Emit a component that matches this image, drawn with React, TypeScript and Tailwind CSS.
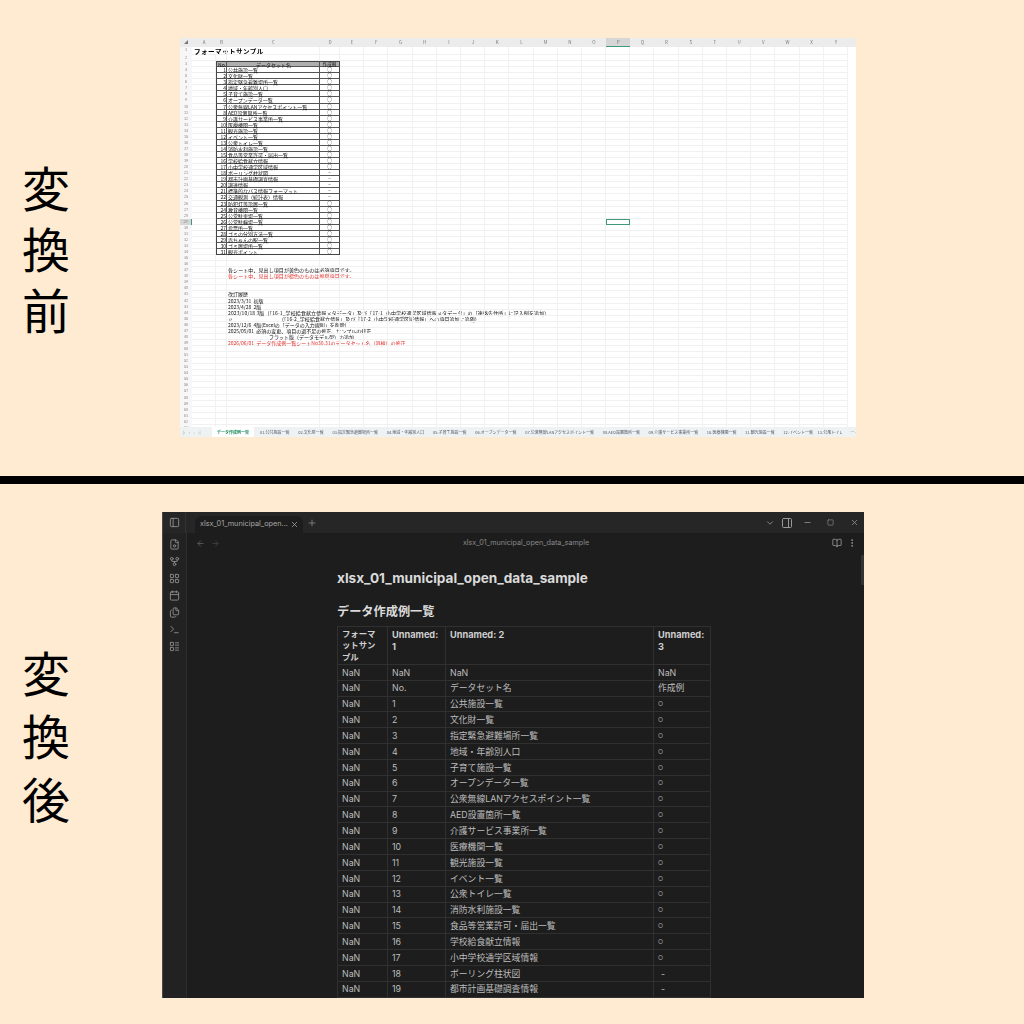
import React from 'react';
import {
  ArrowLeft,
  ArrowRight,
  BookOpen,
  Calendar,
  ChevronDown,
  EllipsisVertical,
  Files,
  GitFork,
  LayoutGrid,
  LayoutList,
  Minus,
  PanelLeft,
  PanelRight,
  Plus,
  Square,
  Terminal,
  X,
} from 'lucide-react';

const datasets = [
  '公共施設一覧',
  '文化財一覧',
  '指定緊急避難場所一覧',
  '地域・年齢別人口',
  '子育て施設一覧',
  'オープンデータ一覧',
  '公衆無線LANアクセスポイント一覧',
  'AED設置箇所一覧',
  '介護サービス事業所一覧',
  '医療機関一覧',
  '観光施設一覧',
  'イベント一覧',
  '公衆トイレ一覧',
  '消防水利施設一覧',
  '食品等営業許可・届出一覧',
  '学校給食献立情報',
  '小中学校通学区域情報',
  'ボーリング柱状図',
  '都市計画基礎調査情報',
  '調達情報',
  '標準的なバス情報フォーマット',
  '交通観測（統計表）情報',
  '防犯灯等設置一覧',
  '教育機関一覧',
  '公営駐車場一覧',
  '公営駐輪場一覧',
  '投票所一覧',
  'ゴミの分別方法一覧',
  '赤ちゃんの駅一覧',
  'ゴミ置場所一覧',
  '観光ポイント',
];

const mark = (no: number) => (no >= 18 && no <= 22 ? '−' : '○');
const columns = 'ABCDEFGHIJKLMNOPQRSTUVWXY'.split('');

// free text in column C, by row
const notes: Record<number, { text: string; className?: string }> = {
  37: { text: '各シート中、見出し項目が黄色のものは必須項目です。', className: 'pl-px tracking-[0.08px]' },
  38: { text: '各シート中、見出し項目が橙色のものは推奨項目です。', className: 'pl-px tracking-[0.08px] text-[#e0302c]' },
  41: { text: '改訂履歴', className: 'pl-px' },
  42: { text: '2023/3/31  初版', className: 'pl-px' },
  43: { text: '2023/4/28  2版', className: 'pl-px' },
  44: {
    text: '2023/10/18 3版（「16-1_学校給食献立情報メタデータ」及び「17-1_小中学校通学区域情報メタデータ」の「連絡先住所」に記入例を追加）',
    className: 'pl-px tracking-[0.11px]',
  },
  45: { text: '〃', className: 'pl-px' },
  46: { text: '2023/12/6  4版(Excelの「データの入力規則」を削除)', className: 'pl-px' },
  47: { text: '2025/05/01  必須の変更、項目の過不足の修正、サンプルの修正', className: 'pl-px' },
  48: { text: 'フラット版（データモデル型）の追加', className: 'pl-[42px]' },
  49: {
    text: '2026/06/01  データ作成例一覧シートNo30,31のデータセット名（誤植）の修正',
    className: 'pl-px text-[#e0302c]',
  },
};

const sheetTabs = [
  '01.公共施設一覧',
  '02.文化財一覧',
  '03.指定緊急避難場所一覧',
  '04.地域・年齢別人口',
  '05.子育て施設一覧',
  '06.オープンデータ一覧',
  '07.公衆無線LANアクセスポイント一覧',
  '08.AED設置箇所一覧',
  '09.介護サービス事業所一覧',
  '10.医療機関一覧',
  '11.観光施設一覧',
  '12.イベント一覧',
];

const SideLabel: React.FC<{ chars: string[]; className: string }> = ({ chars, className }) => (
  <div className={`flex flex-col items-center w-[48px] ml-[22px] text-[48px] text-black ${className}`}>
    {chars.map((c) => (
      <span key={c}>{c}</span>
    ))}
  </div>
);

const SheetCell: React.FC<{ col: string; row: number }> = ({ col, row }) => {
  const inTable = row >= 3 && row <= 34 && (col === 'B' || col === 'C' || col === 'D');
  const isHead = row === 3;
  const no = row - 3;
  const note = col === 'C' ? notes[row] : undefined;

  let cls = 'border-r border-b border-[#f1f1f1] leading-[5px]';
  if (inTable) {
    cls = 'border-b border-[#555] leading-[5px]';
    if (col === 'B') cls += ' border-l-[1.5px] border-l-[#444] border-r text-right';
    if (col === 'C') cls += ' pl-px border-r';
    if (col === 'D') cls += ' border-r-[1.5px] border-r-[#444] text-center text-[4.6px]';
    if (col === 'C' && isHead) cls += ' text-center';
    if (isHead) cls += ' border-t-[1.5px] border-t-[#444] bg-[#aeaeae] leading-[4px]';
    if (row === 34) cls += ' border-b-[1.5px] border-b-[#444]';
  }
  if (col === 'P' && row === 29) cls = 'border border-[#3f9a78]';
  if (note) cls += ` ${note.className ?? ''}`;

  let content: React.ReactNode = null;
  if (inTable) {
    if (isHead) content = col === 'B' ? 'No.' : col === 'C' ? 'データセット名' : '作成例';
    else if (col === 'B') content = no;
    else if (col === 'C') content = datasets[no - 1];
    else content = mark(no);
  }
  if (note) content = note.text;

  return (
    <div className={`relative whitespace-pre text-[#111] ${cls}`}>
      {content}
      {col === 'C' && row === 45 && (
        <span className="absolute left-[52px] top-0 tracking-[0.06px]">（「16-2_学校給食献立情報」及び「17-2_小中学校通学区域情報」への項目追加に追随）</span>
      )}
    </div>
  );
};

const Spreadsheet: React.FC = () => (
  <div className="flex flex-col w-[676px] h-[399px] mt-[38px] bg-white overflow-hidden blur-[0.35px] font-['Noto_Sans_CJK_JP',sans-serif] text-[5px]">
    <div className="flex-1 min-h-0 overflow-hidden">
      <div className="grid grid-cols-[12px_24px_11px_93px_20px_repeat(21,24.2px)_8px] grid-rows-[9px_8px_repeat(63,6.07px)]">
        {/* column letters */}
        <div className="bg-[#ececec] text-[4px] text-[#777] text-center leading-[9px]">◢</div>
        {columns.map((c) => (
          <div
            key={c}
            className={`text-center text-[4.5px] leading-[9px] text-[#777] ${
              c === 'P' ? 'bg-[#d6d6d6] border-b border-[#3f9a78]' : 'bg-[#ececec]'
            }`}
          >
            {c}
          </div>
        ))}
        <div className="bg-[#ececec]" />

        {Array.from({ length: 63 }, (_, i) => i + 1).map((row) => (
          <React.Fragment key={row}>
            <div
              className={`text-center text-[3.8px] leading-[6px] text-[#888] ${
                row === 29 ? 'bg-[#d6d6d6] border-r border-[#3f9a78]' : 'bg-[#f7f7f7]'
              }`}
            >
              {row}
            </div>
            {columns.map((col) =>
              row === 1 && col === 'A' ? (
                <div key={col} className="pl-[2px] text-[6.6px] font-bold leading-[8px] tracking-[0.4px] whitespace-pre text-black border-b border-[#f1f1f1]">
                  フォーマットサンプル
                </div>
              ) : (
                <SheetCell key={col} col={col} row={row} />
              ),
            )}
            <div />
          </React.Fragment>
        ))}
      </div>
    </div>
    <div className="flex items-stretch h-[10px] shrink-0 bg-[#eef2f3] text-[4px] leading-[9px] text-[#556]">
      <div className="flex items-center w-[32px] pl-[3px] gap-[3.5px] text-[#999]">
        <span>|‹</span>
        <span>‹</span>
        <span>›</span>
        <span>›|</span>
      </div>
      <div className="flex items-center justify-center w-[42px] mr-[3px] bg-white text-[#1a8a5c] font-bold">データ作成例一覧</div>
      <div className="flex flex-1 min-w-0 items-center gap-[8.7px] pl-[3px] whitespace-nowrap overflow-hidden">
        {sheetTabs.map((t) => (
          <span key={t}>{t}</span>
        ))}
        <span className="-ml-[4px] w-[24px] overflow-hidden shrink-0">13.公衆トイレ</span>
        <span className="ml-auto shrink-0 pr-[1px]">⋯ +</span>
      </div>
    </div>
  </div>
);

const FileIcon: React.FC = () => (
  <svg width="11" height="11" viewBox="0 0 24 24" fill="none" stroke="currentColor" strokeWidth="2" strokeLinecap="round" strokeLinejoin="round">
    <path d="M15 2H6a2 2 0 0 0-2 2v16a2 2 0 0 0 2 2h12a2 2 0 0 0 2-2V7Z" />
    <path d="M14 2v4a2 2 0 0 0 2 2h4" />
    <circle cx="12" cy="15" r="2.5" />
  </svg>
);

const headers: React.ReactNode[] = [
  <span key="f" className="block text-[8.4px] leading-[11.3px]">
    フォーマ
    <br />
    ットサン
    <br />
    プル
  </span>,
  'Unnamed: 1',
  'Unnamed: 2',
  'Unnamed: 3',
];

const Vault: React.FC = () => {
  const rows = [
    ['NaN', 'NaN', 'NaN', 'NaN'],
    ['NaN', 'No.', 'データセット名', '作成例'],
    ...datasets.slice(0, 19).map((name, i) => ['NaN', String(i + 1), name, i + 1 >= 18 ? '-' : '○']),
  ];

  return (
    <div className="flex flex-col w-[702px] h-[486px] bg-[#1d1d1d] border-l border-[#4a4a4a] text-[#bcbcbc] overflow-hidden font-['Inter','Noto_Sans_CJK_JP',sans-serif]">
      {/* title bar */}
      <div className="flex items-end h-[21px] shrink-0 bg-[#262626]">
        <div className="flex items-center justify-center w-[23px] h-full border-r border-[#333] text-[#999]">
          <PanelLeft size={11} strokeWidth={1.8} />
        </div>
        <div className="flex items-center justify-between w-[108px] h-[17px] ml-[9px] pl-[5px] pr-[4px] bg-[#1d1d1d] rounded-t-md text-[7.3px] text-[#a8a8a8]">
          <span className="whitespace-nowrap">xlsx_01_municipal_open...</span>
          <X size={9} className="shrink-0" />
        </div>
        <div className="flex items-center h-full ml-[4px] text-[#888]">
          <Plus size={10} />
        </div>
        <div className="flex items-center h-full ml-auto text-[#999]">
          <ChevronDown size={10} />
          <PanelRight size={12} className="ml-[6px]" />
          <Minus size={9} className="ml-[10px]" />
          <Square size={7} className="ml-[15px]" />
          <X size={9} className="ml-[16px] mr-[5px]" />
        </div>
      </div>

      <div className="flex flex-1 min-h-0">
        {/* ribbon */}
        <div className="flex flex-col items-center w-[24px] shrink-0 pt-[6px] gap-[6px] border-r border-[#2e2e2e] bg-[#222] text-[#8c8c8c]">
          <FileIcon />
          <GitFork size={11} />
          <LayoutGrid size={11} />
          <Calendar size={11} />
          <Files size={11} />
          <Terminal size={11} />
          <LayoutList size={11} />
        </div>

        <div className="relative flex flex-col flex-1 min-w-0">
          <div className="flex items-center h-[20px] shrink-0 pl-[9px] pr-[7px] text-[#666]">
            <ArrowLeft size={9} />
            <ArrowRight size={9} className="ml-[6px] text-[#444]" />
            <span className="flex-1 text-center text-[7.2px] text-[#8a8a8a]">xlsx_01_municipal_open_data_sample</span>
            <BookOpen size={10} className="text-[#999]" />
            <EllipsisVertical size={10} className="ml-[5px] text-[#999]" />
          </div>

          <div className="flex-1 min-h-0 overflow-hidden pl-[150px] pt-[17px]">
            <h1 className="text-[13.6px] leading-[17px] font-bold text-[#dadada]">xlsx_01_municipal_open_data_sample</h1>
            <h2 className="mt-[17px] text-[12.2px] leading-[16px] font-bold text-[#dadada]">データ作成例一覧</h2>
            <table className="mt-[6px] w-[373px] table-fixed border-collapse text-[8.8px] leading-[11.5px]">
              <colgroup>
                <col className="w-[50px]" />
                <col className="w-[58px]" />
                <col className="w-[208px]" />
                <col className="w-[57px]" />
              </colgroup>
              <thead>
                <tr className="font-bold text-left text-[#cfcfcf]">
                  {headers.map((h, i) => (
                    <th key={i} className="align-top border border-[#303030] px-[4px] pt-[2px] pb-[1px] text-[9.2px]">
                      {h}
                    </th>
                  ))}
                </tr>
              </thead>
              <tbody>
                {rows.map((r, i) => (
                  <tr key={i} className="h-[15.85px]">
                    {r.map((v, j) => (
                      <td key={j} className="border border-[#303030] px-[4px] py-0 whitespace-nowrap">
                        {v === '○' ? (
                          <span className="text-[5.5px]">○</span>
                        ) : v === '-' ? (
                          <span className="pl-[3px]">-</span>
                        ) : (
                          v
                        )}
                      </td>
                    ))}
                  </tr>
                ))}
              </tbody>
            </table>
          </div>

          <div className="absolute right-0 top-[22px] w-[3px] h-[30px] bg-[#333]" />
        </div>
      </div>
    </div>
  );
};

const App: React.FC = () => (
  <div className="flex flex-col w-[1024px] h-[1024px] overflow-hidden bg-[#ffebd2] font-['Noto_Sans_CJK_JP',sans-serif]">
    <section className="flex h-[476px] shrink-0">
      <div className="w-[180px] shrink-0">
        <SideLabel chars={['変', '換', '前']} className="pt-[156px] leading-[61px]" />
      </div>
      <Spreadsheet />
    </section>

    <div className="h-[8px] shrink-0 bg-black" />

    <section className="flex flex-1 min-h-0">
      <div className="w-[162px] shrink-0">
        <SideLabel chars={['変', '換', '後']} className="pt-[156px] leading-[63px]" />
      </div>
      <div className="pt-[28px]">
        <Vault />
      </div>
    </section>
  </div>
);

export default App;
